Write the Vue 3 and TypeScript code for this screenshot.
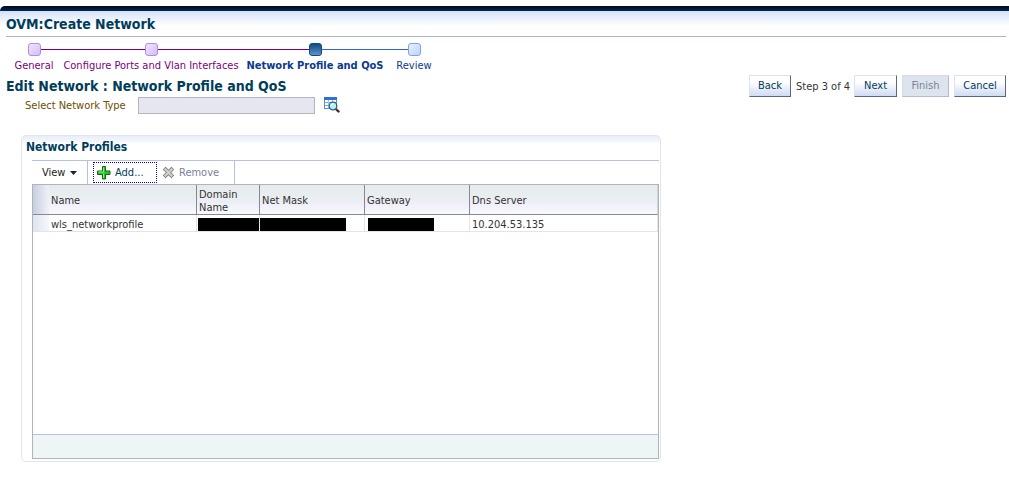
<script setup lang="ts">
import { ref } from 'vue'

interface Step {
  label: string
  state: 'visited' | 'current' | 'next'
}

interface Profile {
  name: string
  dns: string
}

const steps: Step[] = [
  { label: 'General', state: 'visited' },
  { label: 'Configure Ports and Vlan Interfaces', state: 'visited' },
  { label: 'Network Profile and QoS', state: 'current' },
  { label: 'Review', state: 'next' },
]

const networkType = ref('')
const profiles = ref<Profile[]>([{ name: 'wls_networkprofile', dns: '10.204.53.135' }])
</script>

<template>
  <div class="page">
    <header class="banner">
      <h1>OVM:Create Network</h1>
    </header>

    <nav class="train" aria-label="Progress">
      <a v-for="s in steps" :key="s.label" href="#" class="step" :class="s.state">
        <span class="track"><span class="stop"></span></span>
        <span class="label">{{ s.label }}</span>
      </a>
    </nav>

    <div class="heading">
      <h2>Edit Network : Network Profile and QoS</h2>
      <div class="actions">
        <button type="button" class="btn back">Back</button>
        <span class="count">Step 3 of 4</span>
        <button type="button" class="btn forward">Next</button>
        <button type="button" class="btn finish" disabled>Finish</button>
        <button type="button" class="btn cancel">Cancel</button>
      </div>
    </div>

    <div class="field">
      <label for="network-type">Select Network Type</label>
      <input id="network-type" v-model="networkType" type="text" readonly />
      <button type="button" class="lookup" aria-label="Search network type">
        <svg width="16" height="16" viewBox="0 0 16 16">
          <rect x="0.5" y="0.5" width="12" height="11" fill="#fff" stroke="#5a8fe0" />
          <rect x="0" y="0" width="13" height="3" fill="#2f6fd6" />
          <path d="M1 5.5h11M1 8.5h11" stroke="#7aa6ea" />
          <path d="M4.5 3v8M8.500 3v8" stroke="#a8c6f4" />
          <path d="M12 12l2.500 2.500" stroke="#3a2a2a" stroke-width="2.400" stroke-linecap="round" />
          <path d="M12.500 11.800l1.500 1.500" stroke="#d0564a" />
          <circle cx="9" cy="9" r="3.8" fill="#b4f2f6" stroke="#35607c" stroke-width="1.300" />
          <path d="M7 8.700a2.200 2.200 0 0 1 2.200-1.800" fill="none" stroke="#fff" stroke-width="1.200" />
        </svg>
      </button>
    </div>

    <section class="panel">
      <h3>Network Profiles</h3>
      <div class="toolbar">
        <button type="button" class="tool view">
          View
          <svg width="7" height="4" viewBox="0 0 7 4"><path d="M0 0h7L3.5 4z" fill="#222" /></svg>
        </button>
        <div class="group">
          <button type="button" class="tool add">
            <svg width="14" height="14" viewBox="0 0 14 14">
              <path d="M5.500 .5h3V5h4.500v3.500H8.500V13h-3V8.500H.5V5h5z" fill="#2cc32c" stroke="#0b6a13" stroke-linejoin="round" />
              <path d="M6.500 12V7.500M6.500 1.500V6H1.500" fill="none" stroke="#8df07c" />
            </svg>
            Add...
          </button>
          <button type="button" class="tool remove" disabled>
            <svg width="13" height="13" viewBox="0 0 13 13">
              <path d="M2.200 2.200l8.600 8.600M10.800 2.200l-8.600 8.600" stroke="#777" stroke-width="4" />
              <path d="M2.600 2.600l7.800 7.800M10.400 2.600l-7.800 7.800" stroke="#cfcfcf" stroke-width="2.200" />
            </svg>
            Remove
          </button>
        </div>
      </div>
      <div class="grid">
        <table>
          <colgroup>
            <col class="c-handle" />
            <col class="c-name" />
            <col class="c-domain" />
            <col class="c-mask" />
            <col class="c-gateway" />
            <col />
          </colgroup>
          <thead>
            <tr>
              <th class="handle"></th>
              <th>Name</th>
              <th>Domain Name</th>
              <th>Net Mask</th>
              <th>Gateway</th>
              <th>Dns Server</th>
            </tr>
          </thead>
          <tbody>
            <tr v-for="p in profiles" :key="p.name">
              <td class="handle"></td>
              <td>{{ p.name }}</td>
              <td class="masked"><span class="mask full"></span></td>
              <td class="masked netmask"><span class="mask wide"></span></td>
              <td class="masked gateway"><span class="mask narrow"></span></td>
              <td>{{ p.dns }}</td>
            </tr>
          </tbody>
        </table>
        <div class="status"></div>
      </div>
    </section>
  </div>
</template>

<style>
body {
  background: #fff;
}
</style>

<style scoped>
.page,
.page button,
.page input {
  font-family: 'DejaVu Sans Condensed', 'DejaVu Sans', Tahoma, sans-serif;
  font-size: 11px;
  line-height: 13px;
}
.page {
  padding-top: 6px;
  color: #333;
}
.page * {
  box-sizing: border-box;
}
h1,
h2,
h3 {
  margin: 0;
  color: #003d5b;
  font-weight: bold;
  white-space: nowrap;
}
.banner {
  padding: 0 3px 0 6px;
  background: linear-gradient(#000a20, #002850 5px, #d5e0f4 5px, #e4ecfa 10px, #fff 20px);
  border-top-left-radius: 5px;
}
h1 {
  padding: 11px 0 4px;
  border-bottom: 1px solid #aab2cc;
  font-size: 14px;
  line-height: 15px;
}
.train {
  display: grid;
  grid-template-columns: 48px 186px 142px 56px;
  padding: 6px 0 0 10px;
}
.step {
  text-align: center;
  text-decoration: none;
  color: #7b0080;
  white-space: nowrap;
}
.track {
  display: flex;
  align-items: center;
}
.track::before,
.track::after {
  content: '';
  flex: 1;
  height: 1px;
  background: #7b0080;
}
.step:first-child .track::before,
.step:last-child .track::after {
  background: transparent;
}
.current .track::after,
.next .track::before {
  background: #2f63d8;
}
.stop {
  width: 13px;
  height: 13px;
  border: 1px solid #b48ce0;
  border-radius: 3px;
  background: linear-gradient(135deg, #f0e4ff, #d3bdf5);
}
.current .stop {
  border-color: #0b4a86;
  background: linear-gradient(#0f4c85, #5b93c4);
}
.next .stop {
  border-color: #7ba2ee;
  background: linear-gradient(135deg, #e6f0ff, #bcd4fb);
}
.label {
  display: flex;
  justify-content: center;
  padding-top: 3px;
}
.current,
.next {
  color: #0b3a8a;
}
.current {
  font-weight: bold;
}
.heading {
  display: flex;
  align-items: center;
  justify-content: space-between;
  padding: 3px 3px 0 6px;
}
h2 {
  font-size: 14px;
  line-height: 22px;
}
.actions {
  display: flex;
  align-items: center;
  gap: 5px;
}
.btn {
  height: 22px;
  padding: 0 0 2px;
  border: 1px solid;
  border-color: #dde2ec #5d6778 #5d6778 #dde2ec;
  background: linear-gradient(#fff 30%, #cfdcf2);
  color: #003d5b;
}
.back {
  width: 42px;
}
.forward {
  width: 43px;
}
.finish {
  width: 47px;
}
.cancel {
  width: 52px;
}
.btn:disabled {
  border-color: #d6dce6 #b3bccb #b3bccb #d6dce6;
  background: #dde4ee;
  color: #7a8496;
}
.count {
  width: 53px;
  white-space: nowrap;
}
.field {
  display: flex;
  align-items: center;
  padding-left: 25px;
  color: #6b4f00;
}
.field label {
  width: 113px;
}
.field input {
  width: 177px;
  height: 17px;
  padding: 0 3px;
  border: 1px solid #b4b5bb;
  background: #e6e6f0;
}
.lookup {
  height: 17px;
  margin-left: 9px;
  padding: 0 0 1px;
  border: 0;
  background: none;
}
svg {
  display: block;
  flex: none;
}
.panel {
  width: calc(100% - 42px);
  max-width: 640px;
  margin: 21px 21px 18px;
  padding: 0 1px 2px 4px;
  border: 1px solid #dfe6f0;
  border-radius: 5px;
  background: linear-gradient(#e8edf8, #f6f8fd 6px, #fff 7px);
}
h3 {
  padding-top: 4px;
  font-size: 12px;
  line-height: 14px;
}
.toolbar {
  display: flex;
  height: 24px;
  margin: 6px 0 0 6px;
  border-top: 1px solid #b9c0e2;
}
.tool {
  display: flex;
  align-items: center;
  padding: 0;
  border: 0;
  background: none;
  color: #222;
}
.view {
  width: 56px;
  gap: 5px;
  padding-left: 10px;
  border-right: 1px solid #b0c4d8;
}
.group {
  display: flex;
  gap: 4px;
  width: 147px;
  padding: 1px 0 1px 5px;
  border-right: 1px solid #b0c4d8;
}
.add {
  width: 64px;
  gap: 4px;
  padding-left: 3px;
  border: 1px dotted #0000d0;
  color: #003d5b;
}
.remove {
  gap: 4px;
  padding-left: 1px;
  color: #7a8096;
}
.grid {
  display: flex;
  flex-direction: column;
  min-height: 275px;
  margin-left: 6px;
  border: 1px solid #b0b4b4;
}
table {
  width: 100%;
  table-layout: fixed;
  border-collapse: separate;
  border-spacing: 0;
}
.c-handle {
  width: 16px;
}
.c-name {
  width: 148px;
}
.c-domain {
  width: 63px;
}
.c-mask,
.c-gateway {
  width: 105px;
}
th {
  height: 30px;
  padding: 2px 2px 0;
  border-right: 1px solid #84889a;
  border-bottom: 1px solid #84889a;
  background: linear-gradient(#e9e9f1, #e8eeee 35%, #eeeef6 60%, #f8faff);
  font-weight: normal;
  text-align: left;
}
td {
  height: 17px;
  padding: 3px 2px 0;
  border-right: 1px solid #e4e4e4;
  border-bottom: 1px solid #e4e4e4;
}
th:last-child {
  border-right-color: #d0d4dc;
}
.handle {
  padding: 0;
  background: linear-gradient(90deg, #c6cee2, #f0f1f7);
  border-right: 0;
}
td.handle {
  background: linear-gradient(90deg, #dfe4f0, #f6f6fa);
}
.masked {
  padding: 2px 0 0 1px;
}
.masked.netmask {
  padding-left: 0;
}
.masked.gateway {
  padding-left: 3px;
}
.mask {
  display: block;
  height: 13px;
  background: #000;
}
.wide {
  width: 86px;
}
.narrow {
  width: 66px;
}
.status {
  height: 24px;
  margin-top: auto;
  border-top: 1px solid #b9c0e2;
  background: #edf5f5;
}
</style>
